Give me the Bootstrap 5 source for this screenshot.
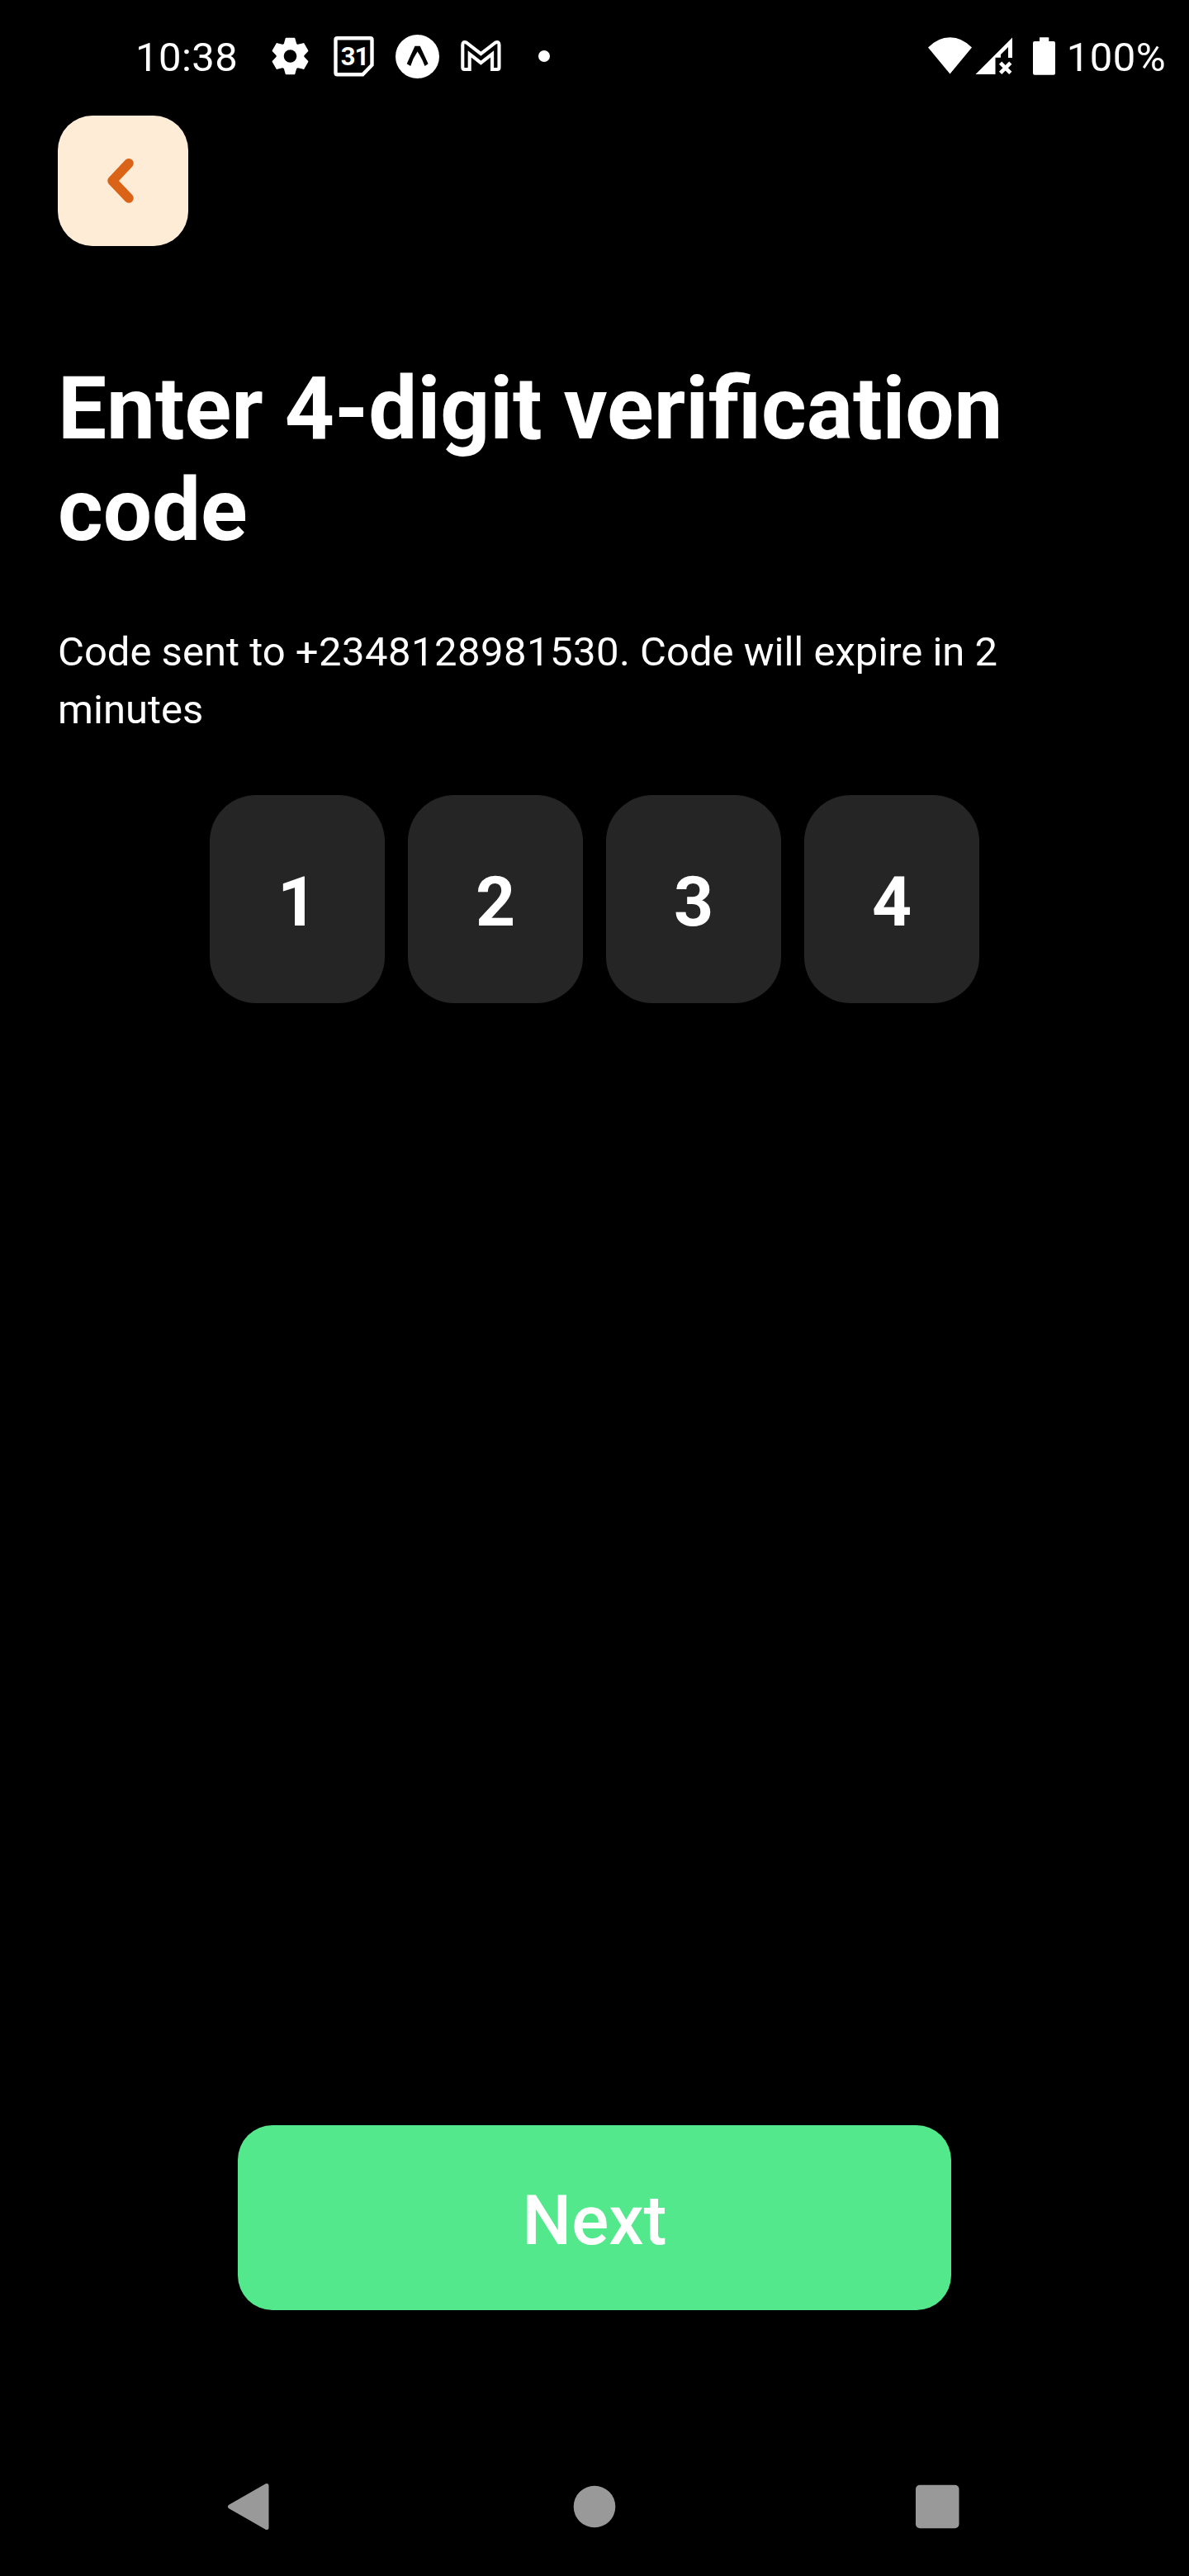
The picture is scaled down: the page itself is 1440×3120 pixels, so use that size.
<!DOCTYPE html>
<html lang="en">
<head>
<meta charset="utf-8">
<meta name="viewport" content="width=device-width, initial-scale=1">
<title>Verification code</title>
<link href="https://cdn.jsdelivr.net/npm/bootstrap@5.3.0/dist/css/bootstrap.min.css" rel="stylesheet">
<style>
  body { background: #000; color: #fff; font-family: Roboto, "Liberation Sans", sans-serif; }
  .screen { width: 1440px; height: 3120px; }
  .status-bar { height: 140px; padding: 0 28px 0 164px; }
  .status-text { font-size: 49px; line-height: 58px; margin-top: 41px; letter-spacing: .46px; }
  .status-time { width: 149px; }
  .status-bar svg { display: block; flex: none; margin-top: 30px; }
  .status-bar .status-signals { margin-right: 6px; }
  .screen-body { padding: 0 70px; }
  .btn-back { width: 158px; height: 158px; border: 0; border-radius: 42px; background: #ffecd6; }
  .btn-back:hover { background: #ffecd6; }
  .screen-title { font-size: 105px; line-height: 123px; font-weight: 700; margin: 136px 0 0; }
  .screen-note { font-size: 49px; line-height: 70px; margin: 75px 0 0; }
  .phone-number { letter-spacing: .46px; }
  .code-row { gap: 28px; margin-top: 68px; }
  .code-cell { width: 212px; height: 252px; border-radius: 56px; background: #252525; font-size: 84px; line-height: 98px; font-weight: 700; padding-top: 8px; }
  .btn-next { width: 864px; height: 224px; border: 0; border-radius: 42px; background: #53e88b; color: #fff; font-size: 84px; line-height: 98px; font-weight: 500; padding: 8px 0 0; margin-bottom: 154px; }
  .btn-next:hover { background: #53e88b; color: #fff; }
  .nav-keys { height: 168px; padding: 0 271px; }
  .nav-keys svg { display: block; }
</style>
<script src="https://cdn.jsdelivr.net/npm/bootstrap@5.3.0/dist/js/bootstrap.bundle.min.js"></script>
</head>
<body>
<div class="screen d-flex flex-column overflow-hidden">
  <header class="status-bar d-flex align-items-start flex-shrink-0">
    <span class="status-text status-time">10:38</span>
    <!-- settings -->
    <svg width="77" height="77" viewBox="-38.5 -38 77 77" fill="#fff" stroke="#fff" stroke-width="2" stroke-linejoin="round">
      <circle r="15.8"/>
      <path id="tooth" d="M-4.900-21.300H4.900L7.200-13V13L4.900 21.300H-4.900L-7.200 13V-13Z"/>
      <use href="#tooth" transform="rotate(60)"/>
      <use href="#tooth" transform="rotate(120)"/>
      <circle r="7.800" fill="#000" stroke="none"/>
    </svg>
    <!-- calendar -->
    <svg width="77" height="77" viewBox="390 30 77 77">
      <path d="M408.500 46.300H448.500Q450.500 46.300 450.500 48.300V78.700L439.300 90.200H408.500Q406.500 90.200 406.500 88.200V48.300Q406.500 46.300 408.500 46.300Z" fill="none" stroke="#fff" stroke-width="4.400"/>
      <text x="412.700" y="78.600" font-family="Roboto, sans-serif" font-weight="700" font-size="31" letter-spacing="-1" fill="#fff">31</text>
    </svg>
    <!-- developer client -->
    <svg width="77" height="77" viewBox="467 30 77 77">
      <circle cx="505.500" cy="68.500" r="26.500" fill="#fff"/>
      <path d="M502.500 55.700H508.700L518.600 77.300L514.500 80Q511 70.500 505.600 62.500Q500 70.500 497.200 80L492.700 77.300Z" fill="#000"/>
    </svg>
    <!-- mail -->
    <svg width="77" height="77" viewBox="544 30 77 77">
      <path d="M562.500 84Q560.300 84 560.300 81.500V54.500Q560.300 49.300 565 51.700L582.400 65.200L599.800 51.700Q604.500 49.300 604.500 54.500V81.500Q604.500 84 602.300 84H596.100V65.400L582.400 76.200L568.700 65.400V84Z" fill="none" stroke="#fff" stroke-width="4.100"/>
    </svg>
    <svg width="77" height="77" viewBox="621 30 77 77"><circle cx="659" cy="68" r="7" fill="#fff"/></svg>
    <!-- wifi, cellular, battery -->
    <svg class="status-signals ms-auto" width="166" height="77" viewBox="1120 30 166 77" fill="#fff">
      <path d="M1124 57.500Q1136 45.200 1150.500 45.200T1177 57.500L1150.500 89.500Z"/>
      <path d="M1226 45.500V70H1221V57L1212 66V69.700H1205.500V90H1181.500Z"/>
      <path d="M1211.600 76.200L1223.800 88.400M1223.800 76.200L1211.600 88.400" stroke="#fff" stroke-width="4.600"/>
      <path d="M1259 45.300H1270.300V50H1276Q1278 50 1278 52V88.700Q1278 90.700 1276 90.700H1253Q1251 90.700 1251 88.700V52Q1251 50 1253 50H1259Z"/>
    </svg>
    <span class="status-text">100%</span>
  </header>

  <main class="screen-body d-flex flex-column flex-grow-1">
    <button type="button" class="btn btn-back p-0" aria-label="Back">
      <svg class="d-block" width="158" height="158" viewBox="70 140 158 158"><path d="M156 197.700L136 219L156 240" fill="none" stroke="#da6317" stroke-width="11.500" stroke-linecap="round" stroke-linejoin="round"/></svg>
    </button>
    <h1 class="screen-title">Enter 4-digit verification code</h1>
    <p class="screen-note">Code sent to <span class="phone-number">+2348128981530</span>. Code will expire in 2 minutes</p>
    <div class="code-row d-flex justify-content-center">
      <div class="code-cell d-flex align-items-center justify-content-center">1</div>
      <div class="code-cell d-flex align-items-center justify-content-center">2</div>
      <div class="code-cell d-flex align-items-center justify-content-center">3</div>
      <div class="code-cell d-flex align-items-center justify-content-center">4</div>
    </div>
    <button type="button" class="btn btn-next mt-auto align-self-center">Next</button>
  </main>

  <nav class="nav-keys d-flex align-items-center justify-content-between flex-shrink-0" aria-label="System">
    <svg width="60" height="60" viewBox="271 3006 60 60"><path d="M278.500 3036L323 3010.500V3061.500Z" fill="#999" stroke="#999" stroke-width="5" stroke-linejoin="round"/></svg>
    <svg width="60" height="60" viewBox="690 3006 60 60"><circle cx="720" cy="3036" r="25.300" fill="#999"/></svg>
    <svg width="60" height="60" viewBox="1109 3006 60 60"><rect x="1109" y="3009.700" width="52.500" height="52.600" rx="5" fill="#999"/></svg>
  </nav>
</div>
</body>
</html>
